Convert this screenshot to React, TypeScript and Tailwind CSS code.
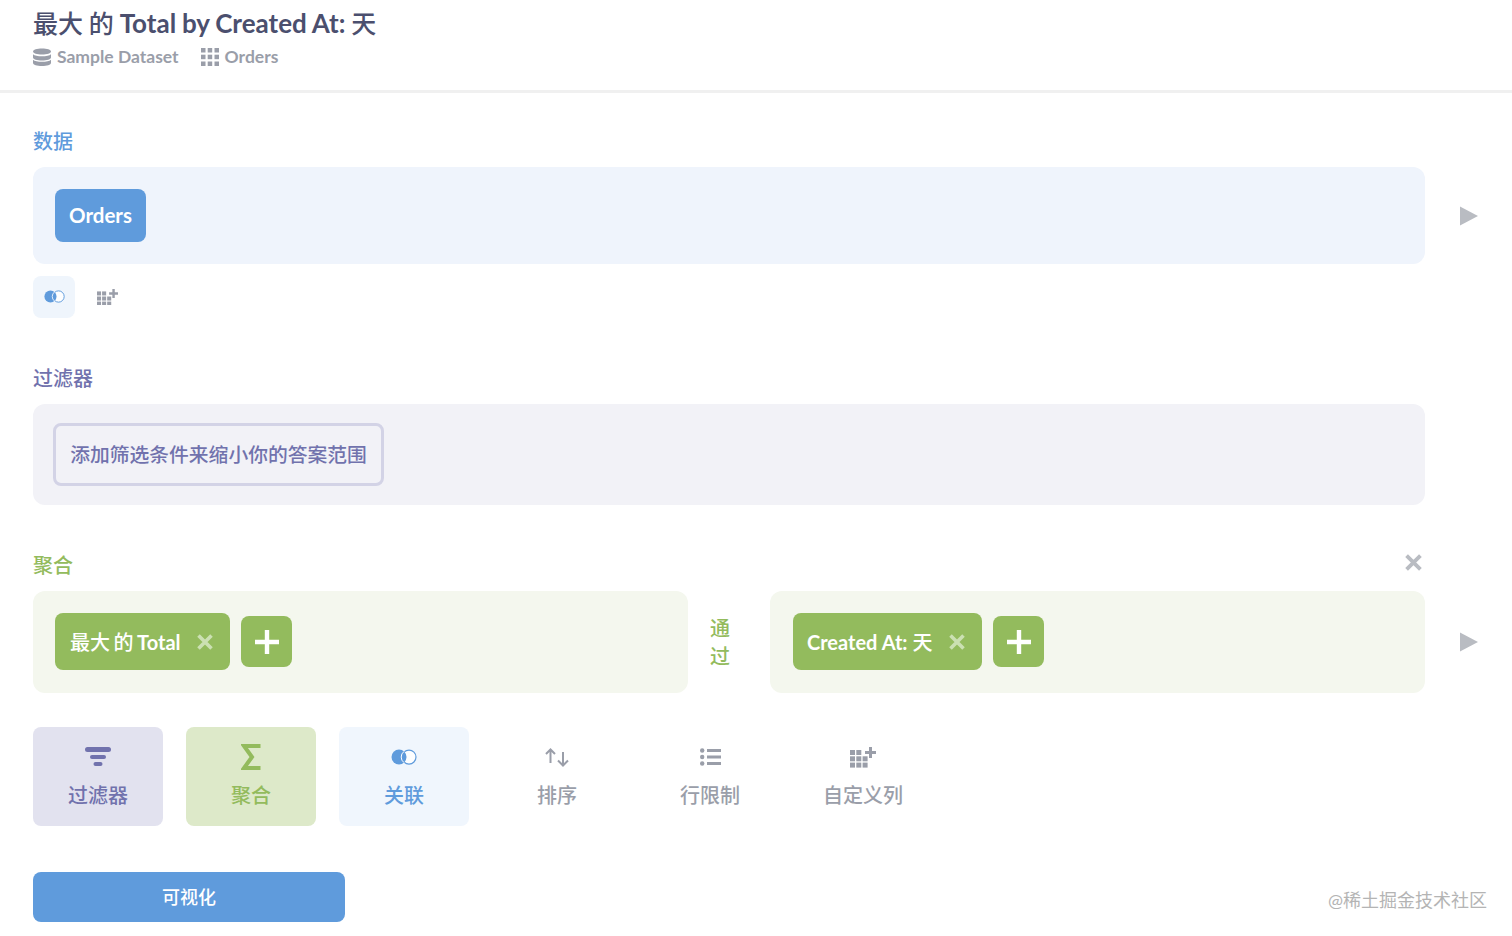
import type { ReactNode } from "react";

function DbIcon() {
  return (
    <svg width="18" height="18" viewBox="0 0 18 18" fill="#9a9ea9">
      <path d="M9 0.5c5 0 9 1.3 9 3s-4 3-9 3-9-1.3-9-3 4-3 9-3z" />
      <path d="M0 6.2c1.4 1.5 5 2.1 9 2.1s7.600-.6 9-2.100v3.300c0 1.700-4 3-9 3s-9-1.300-9-3z" />
      <path d="M0 11.700c1.400 1.500 5 2.100 9 2.100s7.600-.6 9-2.100v3.300c0 1.700-4 3-9 3s-9-1.300-9-3z" />
    </svg>
  );
}

function GridIcon() {
  return (
    <svg width="18" height="18" viewBox="0 0 18 18" fill="#9a9ea9">
      <rect x="0" y="0" width="4.500" height="4.500" />
      <rect x="6.700" y="0" width="4.500" height="4.500" />
      <rect x="13.500" y="0" width="4.500" height="4.500" />
      <rect x="0" y="6.700" width="4.500" height="4.500" />
      <rect x="6.700" y="6.700" width="4.500" height="4.500" />
      <rect x="13.500" y="6.700" width="4.500" height="4.500" />
      <rect x="0" y="13.500" width="4.500" height="4.500" />
      <rect x="6.700" y="13.500" width="4.500" height="4.500" />
      <rect x="13.500" y="13.500" width="4.500" height="4.500" />
    </svg>
  );
}

function JoinIcon({ size = 26 }: { size?: number }) {
  return (
    <svg width={size} height={size * 0.62} viewBox="0 0 26 16">
      <circle cx="8" cy="8" r="7.500" fill="#5f9bdc" />
      <circle cx="18" cy="8" r="7" fill="#fff" fillOpacity="0.85" stroke="#5f9bdc" strokeWidth="1.200" />
      <path d="M13 2.400a7.500 7.500 0 0 1 0 11.200a7 7 0 0 1 0-11.200z" fill="#5f9bdc" />
      <path d="M13 2.400a7 7 0 0 0 0 11.200" fill="none" stroke="#fff" strokeWidth="1" />
    </svg>
  );
}

function ColumnPlusIcon({ size = 26 }: { size?: number }) {
  return (
    <svg width={size} height={(size * 21) / 26} viewBox="0 0 26 21" fill="#9a9ea9">
      <rect x="0" y="3" width="5" height="5" />
      <rect x="6.300" y="3" width="5" height="5" />
      <rect x="0" y="9.300" width="5" height="5" />
      <rect x="6.300" y="9.300" width="5" height="5" />
      <rect x="12.600" y="9.300" width="5" height="5" />
      <rect x="0" y="15.600" width="5" height="5" />
      <rect x="6.300" y="15.600" width="5" height="5" />
      <rect x="12.600" y="15.600" width="5" height="5" />
      <path d="M19 0h3v4h4v3h-4v4h-3V7h-4V4h4z" />
    </svg>
  );
}

function FilterIcon() {
  return (
    <svg width="26" height="20" viewBox="0 0 26 20" fill="#7172ad">
      <rect x="0" y="0" width="26" height="5" rx="2.500" />
      <rect x="5" y="8" width="16" height="4" rx="2" />
      <rect x="8.500" y="15" width="9" height="4" rx="2" />
    </svg>
  );
}

function SigmaIcon() {
  return (
    <svg width="20" height="26" viewBox="0 0 20 26" fill="none" stroke="#93bb5d" strokeWidth="4">
      <path d="M19.500 2H3l8 11-8 11h16.500" />
    </svg>
  );
}

function SortIcon() {
  return (
    <svg width="24" height="19" viewBox="0 0 24 19" fill="none" stroke="#9a9ea9" strokeWidth="2">
      <path d="M5.500 15V1.500M1 6l4.500-4.500L10 6" />
      <path d="M18 4v13.500M13 12.500l5 5 5-5" />
    </svg>
  );
}

function LimitIcon() {
  return (
    <svg width="21" height="18" viewBox="0 0 21 18" fill="#9a9ea9">
      <circle cx="2.200" cy="2.500" r="2.200" />
      <circle cx="2.200" cy="9" r="2.200" />
      <circle cx="2.200" cy="15.500" r="2.200" />
      <rect x="7" y="1" width="14" height="3" />
      <rect x="7" y="7.500" width="14" height="3" />
      <rect x="7" y="14" width="14" height="3" />
    </svg>
  );
}

function Cross({ color, size = 16 }: { color: string; size?: number }) {
  return (
    <svg width={size} height={size} viewBox="0 0 16 16" fill="none" stroke={color} strokeWidth="3.600">
      <path d="M1.500 1.500l13 13M14.500 1.500l-13 13" />
    </svg>
  );
}

function RunArrow() {
  return (
    <svg width="18" height="20" viewBox="0 0 18 20" fill="#b9bcc2">
      <path d="M0 0.500L18 10 0 19.500z" />
    </svg>
  );
}

function Pill({ label, className }: { label: ReactNode; className: string }) {
  return (
    <div className={`mb-[1px] flex h-[57px] items-center justify-between rounded-lg bg-[#93bb5d] pr-[17px] text-[20px] font-medium text-white ${className}`}>
      <span>{label}</span>
      <Cross color="#cbe0b2" />
    </div>
  );
}

function PlusButton() {
  return (
    <div className="mb-[1px] flex h-[51px] w-[51px] items-center justify-center rounded-lg bg-[#93bb5d]">
      <svg width="24" height="24" viewBox="0 0 24 24" fill="#fff">
        <path d="M9.800 0h4.400v9.800H24v4.400h-9.800V24H9.800v-9.800H0V9.800h9.800z" />
      </svg>
    </div>
  );
}

function Tile({ icon, label, className }: { icon: ReactNode; label: string; className: string }) {
  return (
    <div className={`flex h-[99px] w-[130px] flex-col items-center rounded-lg text-[20px] font-medium ${className}`}>
      <div className="mt-[16px] flex h-[28px] items-center justify-center">{icon}</div>
      <div className="mt-[10px] leading-[28px]">{label}</div>
    </div>
  );
}

export default function App() {
  return (
    <div
      className="relative h-[936px] w-[1512px] overflow-hidden bg-white"
      style={{ fontFamily: 'Lato, "Noto Sans CJK SC", sans-serif' }}
    >
      <header className="h-[93px] border-b-[3px] border-[#f0f0f0] pl-[33px] pt-[6px]">
        <h1 className="text-[25px] font-medium leading-[34px] text-[#4b4f6e] [word-spacing:-0.5px]">
          最大 的 <span className="text-[26px] font-bold">Total by Created At:</span> 天
        </h1>
        <div className="mt-[3px] flex items-center text-[17.5px] font-bold leading-[28px] text-[#9a9ea9]">
          <DbIcon />
          <span className="ml-[6px]">Sample Dataset</span>
          <span className="ml-[22px]"><GridIcon /></span>
          <span className="ml-[6px]">Orders</span>
        </div>
      </header>

      <main className="pl-[33px]">
        <div className="mt-[34px] text-[20px] font-medium leading-[28px] text-[#5f9bdc]">数据</div>
        <div className="mt-[12px] flex items-center">
          <div className="flex h-[97px] w-[1392px] items-center rounded-xl bg-[#eff4fc] pl-[22px]">
            <div className="flex h-[53px] w-[91px] items-center justify-center rounded-lg bg-[#5f9bdc] text-[20.5px] font-bold text-white">
              Orders
            </div>
          </div>
          <div className="ml-[35px]"><RunArrow /></div>
        </div>
        <div className="mt-[12px] flex items-center">
          <div className="flex h-[42px] w-[42px] items-center justify-center rounded-lg bg-[#eff5fc]">
            <JoinIcon size={21} />
          </div>
          <div className="ml-[22px]"><ColumnPlusIcon size={21} /></div>
        </div>

        <div className="mt-[46px] text-[20px] font-medium leading-[28px] text-[#7172ad]">过滤器</div>
        <div className="mt-[12px] flex h-[101px] w-[1392px] items-center rounded-xl bg-[#f2f2f7] pl-[20px]">
          <div className="flex h-[63px] w-[331px] items-center justify-center rounded-lg border-[3px] border-[#d3d3e6] text-[19.8px] font-medium text-[#7172ad]">
            添加筛选条件来缩小你的答案范围
          </div>
        </div>

        <div className="mt-[46px] flex h-[28px] w-[1392px] justify-between">
          <span className="text-[20px] font-medium leading-[28px] text-[#93bb5d]">聚合</span>
          <span className="mr-[3px] mt-[3px]"><Cross color="#b9bcc2" size={17} /></span>
        </div>
        <div className="mt-[12px] flex items-center">
          <div className="flex w-[1392px] items-center">
            <div className="flex h-[102px] w-[655px] items-center gap-[11px] rounded-xl bg-[#f4f7ee] pl-[22px]">
              <Pill
                label={<>最大 的 <span className="font-bold">Total</span></>}
                className="w-[175px] pl-[15px] [word-spacing:-1.5px]"
              />
              <PlusButton />
            </div>
            <div className="w-[82px] pr-[18px] text-center text-[20px] font-medium leading-[28px] text-[#93bb5d]">
              <div>通</div>
              <div>过</div>
            </div>
            <div className="flex h-[102px] w-[655px] items-center gap-[11px] rounded-xl bg-[#f4f7ee] pl-[23px]">
              <Pill label={<><span className="font-bold">Created At:</span> 天</>} className="w-[189px] pl-[14px]" />
              <PlusButton />
            </div>
          </div>
          <div className="ml-[35px]"><RunArrow /></div>
        </div>

        <div className="mt-[34px] flex gap-[23px]">
          <Tile icon={<FilterIcon />} label="过滤器" className="bg-[#e2e2ef] text-[#7172ad]" />
          <Tile icon={<SigmaIcon />} label="聚合" className="bg-[#dde9c9] text-[#93bb5d]" />
          <Tile icon={<JoinIcon />} label="关联" className="bg-[#f0f6fd] text-[#5f9bdc]" />
          <Tile icon={<SortIcon />} label="排序" className="text-[#9a9ea9]" />
          <Tile icon={<LimitIcon />} label="行限制" className="text-[#9a9ea9]" />
          <Tile icon={<ColumnPlusIcon />} label="自定义列" className="text-[#9a9ea9]" />
        </div>

        <div className="mt-[46px] flex h-[50px] w-[312px] items-center justify-center rounded-lg bg-[#5f9bdc] text-[18px] font-medium text-white">
          可视化
        </div>
      </main>

      <div className="absolute right-[25px] top-[888px] text-[18px] leading-[24px] text-[#b4b4b4]">@稀土掘金技术社区</div>
    </div>
  );
}
